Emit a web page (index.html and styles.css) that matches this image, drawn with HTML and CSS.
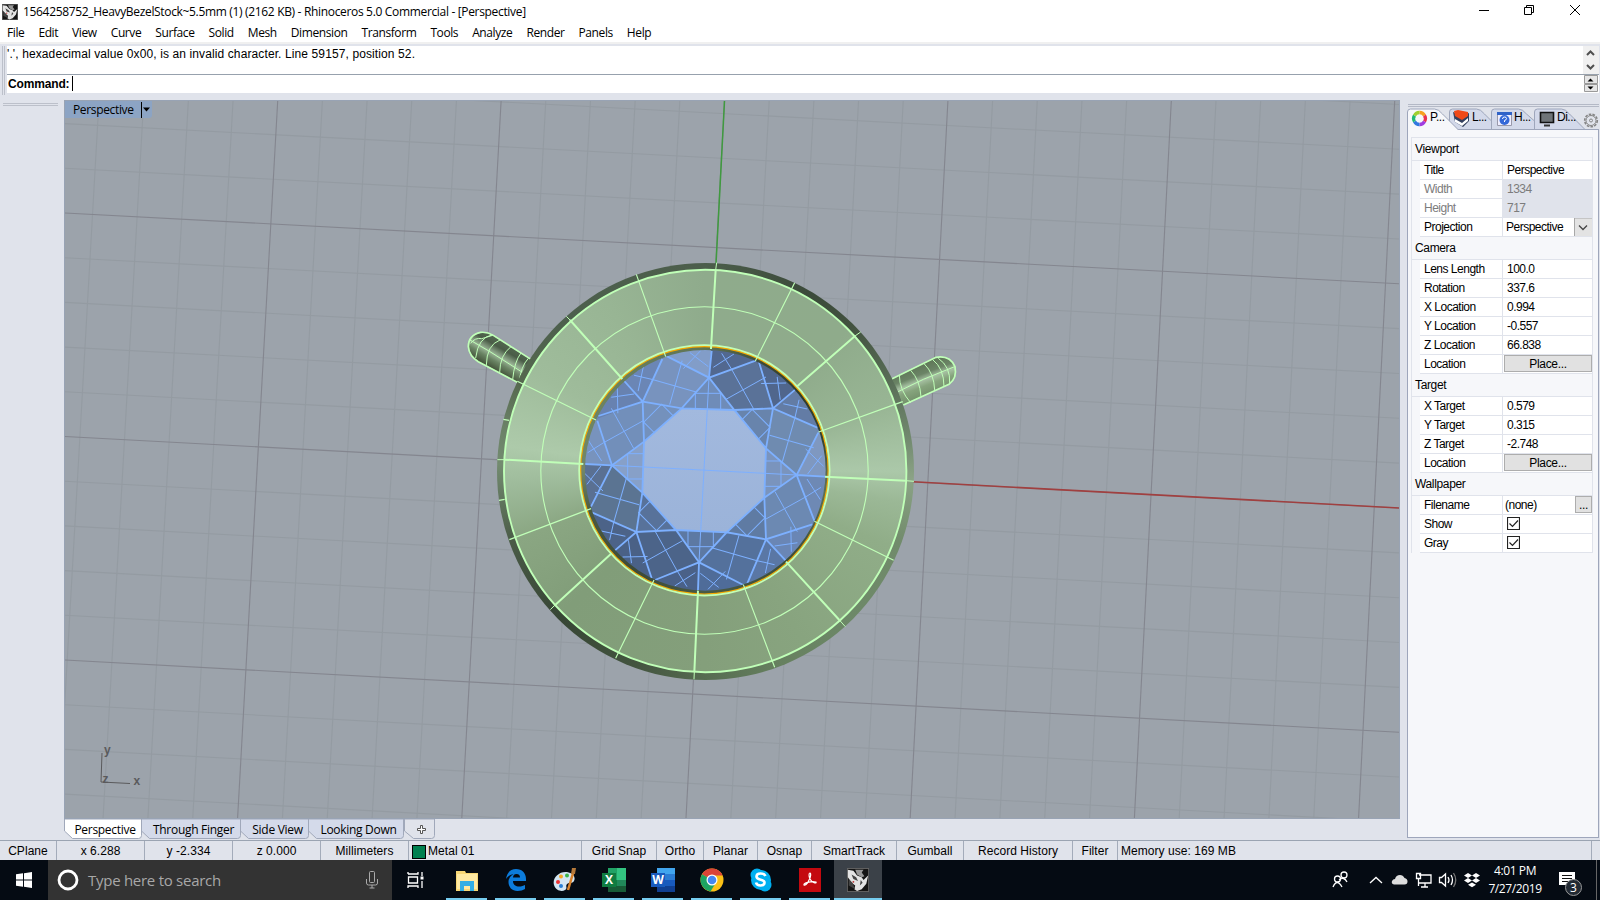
FILE: index.html
```html
<!DOCTYPE html>
<html lang="en">
<head>
<meta charset="utf-8">
<title>Rhinoceros 5.0 Commercial</title>
<link rel="stylesheet" href="styles.css">
</head>
<body>
<svg width="0" height="0" class="defs">
  <symbol id="rhino" viewBox="0 0 24 26">
    <rect width="24" height="26" fill="#666"/>
    <rect x="1" y="1" width="22" height="24" fill="#151515"/>
    <path d="M1 2l6 1 4 5 5 2 2 3 5-5-2 9-5 6-5 2-3-2 1-4-4-3-4-6z" fill="#e4e4e4"/>
    <path d="M9 2h9l-2 3 3 4-3 1-5-3z" fill="#999"/>
    <path d="M5 7l5 3 2 4-5-2zM2 12l4 4 3 7-7-4zM15 13l2 3-3 3z" fill="#444"/>
    <circle cx="7" cy="15" r="1" fill="#b33"/>
  </symbol>
</svg>
<div class="app">
  <header class="titlebar">
    <svg class="app-icon" viewBox="0 0 24 26" preserveAspectRatio="none"><use href="#rhino"/></svg>
    <span class="title">1564258752_HeavyBezelStock~5.5mm (1) (2162 KB) - Rhinoceros 5.0 Commercial - [Perspective]</span>
    <svg class="window-buttons" viewBox="0 0 140 24" fill="none" stroke="#000">
      <path d="M19 10.500h10"/>
      <path d="M64.500 7.500h7v7h-7zM66.500 7.500v-2h7v7h-2"/>
      <path d="M110 5l10 10M120 5l-10 10"/>
    </svg>
  </header>
  <nav class="menu">
    <span>File</span><span>Edit</span><span>View</span><span>Curve</span><span>Surface</span><span>Solid</span><span>Mesh</span><span>Dimension</span><span>Transform</span><span>Tools</span><span>Analyze</span><span>Render</span><span>Panels</span><span>Help</span>
  </nav>
  <section class="command">
    <div class="grip"></div>
    <div class="command-text">
      <div class="history"><span>'.', hexadecimal value 0x00, is an invalid character. Line 59157, position 52.</span></div>
      <div class="prompt"><b>Command:</b><i class="caret"></i></div>
    </div>
    <svg class="command-scroll" viewBox="0 0 16 47">
      <rect width="16" height="28" fill="#f0f0f0"/>
      <path d="M4 9l3.500-3.500L11 9M4 19l3.500 3.500L11 19" fill="none" stroke="#505050" stroke-width="2"/>
      <path d="M0 28.500h16" stroke="#97a1ad"/>
      <path d="M1.500 29.500h13v8h-13zM1.500 38.500h13v7h-13z" fill="#e6e6e6" stroke="#9a9a9a"/>
      <path d="M4.500 35.500h6l-3-3zM4.500 40.500h6l-3 3z"/>
    </svg>
  </section>
  <main class="work">
    <aside class="left-dock"><div class="dock-grip"></div></aside>
    <section class="center">
      <div class="viewport">
        <svg class="scene" viewBox="64 101 1336 717">
          <defs>
            <clipPath id="gemClip"><circle cx="406" cy="391" r="361"/></clipPath>
            <linearGradient id="table" x2="0" y2="1"><stop stop-color="#a2b9de"/><stop offset="1" stop-color="#9bb3d9"/></linearGradient>
            <linearGradient id="prongL" gradientUnits="userSpaceOnUse" x1="168" y1="280" x2="126" y2="352">
              <stop stop-color="#52674f"/><stop offset=".25" stop-color="#4a5c47"/><stop offset=".55" stop-color="#9ab496"/><stop offset=".75" stop-color="#6a8464"/><stop offset="1" stop-color="#48593f"/>
            </linearGradient>
            <linearGradient id="prongR" gradientUnits="userSpaceOnUse" x1="1398" y1="350" x2="1430" y2="435">
              <stop stop-color="#607859"/><stop offset=".3" stop-color="#6b8466"/><stop offset=".5" stop-color="#a6c0a2"/><stop offset=".7" stop-color="#86a47d"/><stop offset="1" stop-color="#75926d"/>
            </linearGradient>
            <g id="iso">
              <path d="M485 88L551 207M468 178L588 111M376 205V160H452V208M430 82L492 42M455 40L485 88M415 80L360 38M392 32L340 86"/>
            </g>
          </defs>
          <g id="minor" class="minor"></g>
          <g id="major" class="major"></g>
          <path d="M724.500 101L716 264" stroke="#3f9a3f" stroke-width="1.500"/>
          <path d="M913 481.800L1399 508" stroke="#a04040" stroke-width="1.600"/>
          <g class="wire" transform="translate(450 250) scale(.33333)">
            <path d="M243 328L130 256Q112 245 92 247Q55 255 55 290Q57 318 85 335L213 403z" fill="url(#prongL)"/>
            <path d="M243 328L130 256Q112 245 92 247Q55 255 55 290Q57 318 85 335L213 403" stroke-width="5"/>
            <path d="M60 270L120 305L225 372M128 254Q84 262 77 324M150 270Q110 285 109 345M183 290Q150 315 149 367M213 309Q193 335 188 389M235 325Q212 350 207 400M62 280Q75 262 95 266L128 256" stroke-width="3"/>
            <path d="M1325 387L1458 322Q1500 315 1515 350Q1522 385 1497 403L1360 465z" fill="url(#prongR)"/>
            <path d="M1325 387L1458 322Q1500 315 1515 350Q1522 385 1497 403L1360 465" stroke-width="5"/>
            <path d="M1338 428L1420 388L1514 350M1382 361Q1410 390 1413 440M1423 342Q1452 370 1454 420M1448 329Q1482 355 1482 410M1465 325Q1502 350 1499 400M1348 375Q1348 420 1382 458" stroke-width="3"/>
          </g>
          <foreignObject x="497" y="262.500" width="417" height="417"><div class="rim"></div></foreignObject>
          <foreignObject x="504" y="269.500" width="402" height="402"><div class="face"></div></foreignObject>
          <foreignObject x="580" y="346" width="249" height="249"><div class="seat"></div></foreignObject>
          <g class="wire">
            <circle cx="705.200" cy="471" r="201.200" stroke-width="1.900"/>
            <circle cx="704.500" cy="470.500" r="163.700" stroke-width="1.100"/>
          </g>
          <g transform="translate(570 340) scale(.33333)">
            <g clip-path="url(#gemClip)" stroke="none">
              <path fill="#5a7298" d="M417 113L493 210L609 205L562 55z"/>
              <path fill="#6f8bb0" d="M609 205L588 325L680 405L755 268z"/>
              <path fill="#6c89b2" d="M680 405L583 473L588 598L745 555z"/>
              <path fill="#54719c" d="M588 598L470 577L387 667L525 745z"/>
              <path fill="#4c6489" d="M387 667L318 570L199 576L245 735z"/>
              <path fill="#5b7492" d="M199 576L217 458L126 376L50 510z"/>
              <path fill="#728fba" d="M126 376L222 305L218 185L70 235z"/>
              <path fill="#7893be" d="M218 185L335 205L417 113L280 40z"/>
              <path fill="#829dc8" d="M417 113L425 20L280 20V45z"/>
              <path fill="#52688f" d="M417 113L425 20L570 20L560 62z"/>
              <path fill="#50668c" d="M609 205L560 62L600 20L700 130z"/>
              <path fill="#637ca5" d="M609 205L690 135L780 250L750 268z"/>
              <path fill="#7f98c0" d="M680 405L748 268L800 290L780 411z"/>
              <path fill="#6e89b4" d="M680 405L780 411L770 560L735 548z"/>
              <path fill="#6a86b5" d="M588 598L735 548L760 620L660 676z"/>
              <path fill="#5a77a5" d="M588 598L660 676L600 740L525 738z"/>
              <path fill="#4f6c99" d="M387 667L525 738L520 780L384 770z"/>
              <path fill="#4a6188" d="M387 667L384 770L240 770L248 722z"/>
              <path fill="#4a6186" d="M199 576L248 722L200 740L120 645z"/>
              <path fill="#4c6388" d="M199 576L120 645L20 550L60 512z"/>
              <path fill="#5a7092" d="M126 376L60 512L20 500L30 371z"/>
              <path fill="#7893bd" d="M126 376L30 371L30 240L78 238z"/>
              <path fill="#6882b0" d="M218 185L78 238L60 190L150 108z"/>
              <path fill="#6b86b5" d="M218 185L150 108L200 40L283 45z"/>
              <path fill="#6f8cb8" d="M417 113L493 210L335 205z"/>
              <path fill="#6884ac" d="M609 205L588 325L493 210z"/>
              <path fill="#7a94bd" d="M680 405L583 473L588 325z"/>
              <path fill="#5f7ba3" d="M588 598L470 577L583 473z"/>
              <path fill="#5d79a3" d="M387 667L318 570L470 577z"/>
              <path fill="#58729a" d="M199 576L217 458L318 570z"/>
              <path fill="#87a0c8" d="M126 376L222 305L217 458z"/>
              <path fill="#7491bc" d="M218 185L335 205L222 305z"/>
              <path fill="url(#table)" d="M335 205L493 210L588 325L583 473L470 577L318 570L217 458L222 305z"/>
            </g>
            <g clip-path="url(#gemClip)" fill="none" stroke="#7db0ff">
              <g stroke-width="3">
                <use href="#iso"/><use href="#iso" transform="rotate(45 403 390)"/><use href="#iso" transform="rotate(90 403 390)"/><use href="#iso" transform="rotate(135 403 390)"/><use href="#iso" transform="rotate(180 403 390)"/><use href="#iso" transform="rotate(225 403 390)"/><use href="#iso" transform="rotate(270 403 390)"/><use href="#iso" transform="rotate(315 403 390)"/>
                <path d="M417 113L387 667M126 376L680 405"/>
              </g>
              <path stroke-width="5.500" d="M335 205L493 210L588 325L583 473L470 577L318 570L217 458L222 305zM417 113L493 210L609 205L588 325L680 405L583 473L588 598L470 577L387 667L318 570L199 576L217 458L126 376L222 305L218 185L335 205z"/>
              <path stroke-width="5.500" d="M417 113L425 33M609 205L680 145M680 405L765 410M588 598L650 665M387 667L384 750M199 576L128 637M126 376L45 372M218 185L160 120M557 62L417 113L287 47M567 67L609 205L742 263M745 278L680 405L733 542M727 553L588 598L532 730M520 735L387 667L255 720M245 715L199 576L67 518M63 500L126 376L82 242M85 228L218 185L277 57"/>
            </g>
          </g>
          <circle cx="704.400" cy="470.300" r="123.800" fill="none" stroke="#f5a800" stroke-width="1.300"/>
          <circle cx="704.400" cy="470.300" r="125.200" fill="none" stroke="#c4ffb4" stroke-width="1.800"/>
          <g class="wire" transform="translate(450 250) scale(.33333)">
            <path stroke-width="6" d="M797 60L783 297M360 210L517 387M1215 258L1040 410M163 629L400 642M1368 692L1125 680M313 1067L485 910M1168 1110L1008 935M733 1266L744 1022"/>
            <path stroke-width="3" d="M800 38L797 60M349 199L360 210M1232 246L1215 258M142 629L163 629M1392 694L1368 692M301 1079L313 1067M1186 1130L1168 1110M732 1288L733 1266"/>
            <path stroke-width="3.500" d="M559 73L647 320M1034 98L916 333M1358 455L1106 546M1331 931L1093 814M974 1252L880 1004M497 1225L612 990M178 869L423 776M202 394L438 510M160 508L177 511M147 751L164 748"/>
          </g>
          <g class="gumball">
            <path d="M102 753L101 782L130 783.500"/>
            <text x="104" y="754">y</text><text x="102.500" y="783">z</text><text x="133.500" y="785">x</text>
          </g>
        </svg>
        <div class="viewport-label"><span>Perspective</span><svg viewBox="0 0 12 18"><path d="M1.500 1v16" stroke="#000"/><path d="M3 6.500h7l-3.500 4z"/></svg></div>
      </div>
      <div class="view-tabs">
        <svg class="tab-shapes" viewBox="0 0 400 20" stroke="#a0a8ba">
          <path d="M340.500 0v12l9 7.500h18q3 0 3-3v-16.500z" fill="#e0e3eb"/>
          <path d="M244.500 0v12l8 7.500h84q3 0 3-3v-16.500z" fill="#d4daea"/>
          <path d="M176.500 0v12l8 7.500h57q3 0 3-3v-16.500z" fill="#d4daea"/>
          <path d="M77.500 0v12l8 7.500h88q3 0 3-3v-16.500z" fill="#d4daea"/>
          <path d="M.5 0v12l8 7.500h66q3 0 3-3v-16.500z" fill="#fff"/>
          <path d="M356.500 6.500h2v3h3v2h-3v3h-2v-3h-3v-2h3z" fill="#fff" stroke="#555"/>
        </svg>
        <span class="t1">Perspective</span><span class="t2">Through Finger</span><span class="t3">Side View</span><span class="t4">Looking Down</span>
      </div>
    </section>
    <aside class="panel">
      <div class="panel-grip"></div>
      <div class="panel-tabs">
        <svg class="panel-tab-shapes" viewBox="0 0 192 22" stroke="#9ea6bb">
          <path d="M127.500 22V4q0-3 3-3h24q4 0 8 5l16 16" fill="#d3d9ea"/>
          <path d="M84.500 22V4q0-3 3-3h24q4 0 8 5l8 7v9" fill="#d3d9ea"/>
          <path d="M42.500 22V4q0-3 3-3h24q4 0 8 5l7 7v9" fill="#d3d9ea"/>
          <path d="M0 21.500h192"/>
          <path d="M.5 23V4q0-3 3-3h24q4 0 8 5l16 16" fill="#f6f7fa"/>
          <path d="M1 22.500h50" stroke="#f6f7fa"/>
          <g fill="none" stroke-width="3.300">
            <path d="M12.500 4.500a5.500 5.500 0 0 1 5 3" stroke="#f6a020"/><path d="M17.500 7.500a5.500 5.500 0 0 1 0 6" stroke="#e83050"/><path d="M17.500 13.500a5.500 5.500 0 0 1-5 3" stroke="#a03ce0"/><path d="M12.500 16.500a5.500 5.500 0 0 1-5-3" stroke="#3078e0"/><path d="M7.500 13.500a5.500 5.500 0 0 1 0-6" stroke="#20b878"/><path d="M7.500 7.500a5.500 5.500 0 0 1 5-3" stroke="#a0d030"/>
          </g>
          <path d="M46 4l10 4 6-3v8l-6 6-8-5z" fill="#33405f" stroke="none"/><path d="M47 3l4-1 10 2v4l-6 4-7-4z" fill="#f04818" stroke="none"/><path d="M48 11l7 4 6-5v3l-6 5-7-4z" fill="#fff" stroke="none"/>
          <path d="M90.500 4.500h14v13h-14z" fill="#eef" stroke="#99a"/><path d="M90 4h15v3H90z" fill="#2f62c8" stroke="none"/><circle cx="97.500" cy="12" r="5" fill="#3468d8" stroke="none"/><path d="M95.500 11q0-2 2-2t2 1.500-2 2v1.500" fill="none" stroke="#fff"/>
          <path d="M133.500 4.500h13v10h-13z" fill="#6f7478" stroke="#111" stroke-width="1.600"/><path d="M137 17.500h6" stroke="#333" stroke-width="2"/>
          <g fill="none" stroke="#858585"><circle cx="184" cy="12.500" r="6.300" stroke-width="1.600" stroke-dasharray="2.600 1.200"/><circle cx="184" cy="12.500" r="5"/><circle cx="184" cy="12.500" r="1.500"/></g>
        </svg>
        <span class="p1">P...</span><span class="p2">L...</span><span class="p3">H...</span><span class="p4">Di...</span>
      </div>
      <div class="panel-body">
        <div class="props">
          <h3>Viewport</h3>
          <div class="row"><span>Title</span><span>Perspective</span></div>
          <div class="row off"><span>Width</span><span>1334</span></div>
          <div class="row off"><span>Height</span><span>717</span></div>
          <div class="row"><span>Projection</span><span class="tight">Perspective<svg class="combo" viewBox="0 0 18 18"><path d="M.5 0v18M0 0h18" stroke="#a8a8a8"/><path d="M5 7.500l4 4 4-4" fill="none" stroke="#444" stroke-width="1.300"/></svg></span></div>
          <h3>Camera</h3>
          <div class="row"><span>Lens Length</span><span>100.0</span></div>
          <div class="row"><span>Rotation</span><span>337.6</span></div>
          <div class="row"><span>X Location</span><span>0.994</span></div>
          <div class="row"><span>Y Location</span><span>-0.557</span></div>
          <div class="row"><span>Z Location</span><span>66.838</span></div>
          <div class="row"><span>Location</span><button>Place...</button></div>
          <h3>Target</h3>
          <div class="row"><span>X Target</span><span>0.579</span></div>
          <div class="row"><span>Y Target</span><span>0.315</span></div>
          <div class="row"><span>Z Target</span><span>-2.748</span></div>
          <div class="row"><span>Location</span><button>Place...</button></div>
          <h3>Wallpaper</h3>
          <div class="row"><span>Filename</span><span class="none">(none)<button class="dots">...</button></span></div>
          <div class="row"><span>Show</span><span><svg class="check" viewBox="0 0 13 13"><path d="M.5.5h12v12H.5z"/><path d="M2.500 6.500l3 3 5.500-6"/></svg></span></div>
          <div class="row"><span>Gray</span><span><svg class="check" viewBox="0 0 13 13"><path d="M.5.5h12v12H.5z"/><path d="M2.500 6.500l3 3 5.500-6"/></svg></span></div>
        </div>
      </div>
    </aside>
  </main>
  <footer class="status">
    <span>CPlane</span><span>x 6.288</span><span>y -2.334</span><span>z 0.000</span><span class="mm">Millimeters</span><span class="layer"><i></i>Metal 01</span><span>Grid Snap</span><span>Ortho</span><span>Planar</span><span>Osnap</span><span>SmartTrack</span><span>Gumball</span><span>Record History</span><span>Filter</span><span class="mem">Memory use: 169 MB</span><span></span>
  </footer>
  <div class="taskbar">
    <div class="start"><svg width="16" height="16" viewBox="0 0 16 16" fill="#fff"><path d="M0 2.300l7-1v6.200H0zM8 1.200L16 0v7.500H8zM0 8.500h7v6.200l-7-1zM8 8.500h8V16l-8-1.200z"/></svg></div>
    <div class="search">
      <svg width="22" height="22" viewBox="0 0 22 22"><circle cx="11" cy="11" r="9" fill="none" stroke="#fff" stroke-width="2.800"/></svg>
      <span>Type here to search</span>
      <svg width="12" height="18" viewBox="0 0 12 18" fill="none" stroke="#aaa"><path d="M3.500 1.500q0-1 1-1h3q1 0 1 1v9q0 1-1 1h-3q-1 0-1-1zM.5 8v4q0 2 2 2h7q2 0 2-2V8M6 14v3M3.500 17h5"/></svg>
    </div>
    <div class="taskview"><svg width="18" height="18" viewBox="0 0 18 18" fill="none" stroke="#fff" stroke-width="1.300"><path d="M1 3V1M1 3h10V1M1.500 6h9v6h-9zM1 17v-2h10v2M15 1v4M15 10v7"/><path d="M13.500 5.500h3v3h-3z" fill="#fff" stroke="none"/></svg></div>
    <div class="task"><svg viewBox="0 0 24 24"><path d="M1 3h9l1 2h12v18H1z" fill="#f8d775"/><path d="M2 6h20v15H2z" fill="#ffe9a2"/><path d="M5 13h14v10h-4v-5H9v5H5z" fill="#32aee5"/></svg></div>
    <div class="task"><svg viewBox="0 0 24 24"><path d="M2 11C3 4 7 1 12 1c6 0 10 4 10 10v2H9c0 4 3 5.500 6 5.500 2.500 0 4.500-.7 6-1.500v4c-2 1.200-4.300 2-7.500 2C8 23 4.500 19 4.500 14c0-3.500 2-6.500 5-7.800C6 6.500 3.500 8.500 2 11zm7-1.500h7C16 7.500 15 6 12.500 6S9.200 7.800 9 9.500z" fill="#0c7cdc"/></svg></div>
    <div class="task paint"><svg viewBox="0 0 24 24"><path d="M1 17C-1 10 6 3 14 4c6 1 9 5 7 9-2 3-5 1-7 3s1 4-2 6-9 1-11-5z" fill="#d3e6f3"/><circle cx="5" cy="14" r="2" fill="#e33"/><circle cx="8" cy="8.500" r="2" fill="#f5a623"/><circle cx="14" cy="7.500" r="2" fill="#3bb54a"/><circle cx="8" cy="18" r="2" fill="#2a7fd4"/><path d="M21 2l-6 20" stroke="#d9822b" stroke-width="2.500"/><path d="M19 0h4l-1 6h-4z" fill="#b5793a"/></svg></div>
    <div class="task"><svg viewBox="0 0 24 24"><path d="M6 0h18v24H6z" fill="#185c37"/><path d="M6 0h18v12H6z" fill="#33c481"/><path d="M6 0h9v12H6z" fill="#21a366"/><path d="M6 12h9v6H6z" fill="#107c41"/><path d="M15 12h9v6h-9z" fill="#21895a"/><path d="M0 5h14v14H0z" fill="#107c41"/><text x="7" y="16">X</text></svg></div>
    <div class="task"><svg viewBox="0 0 24 24"><path d="M6 0h18v24H6z" fill="#103f91"/><path d="M6 0h18v6H6z" fill="#41a5ee"/><path d="M6 6h18v6H6z" fill="#2b7cd3"/><path d="M6 12h18v6H6z" fill="#185abd"/><path d="M0 5h14v14H0z" fill="#185abd"/><text x="7" y="16">W</text></svg></div>
    <div class="task"><svg viewBox="0 0 24 24"><circle cx="12" cy="12" r="11.500" fill="#fbc116"/><path d="M12 12L2 6.300A11.500 11.500 0 0 1 22.500 7.500H12z" fill="#db4437"/><path d="M2 6.300A11.500 11.500 0 0 0 10.500 23.400L16 14.500 12 12z" fill="#1da462"/><circle cx="12" cy="12" r="5.500" fill="#fff"/><circle cx="12" cy="12" r="4.300" fill="#4688f1"/></svg></div>
    <div class="task"><svg viewBox="0 0 24 24"><circle cx="12" cy="12" r="10" fill="#00aff0"/><circle cx="8" cy="7" r="6.500" fill="#00aff0"/><circle cx="16" cy="17" r="6.500" fill="#00aff0"/><path d="M16.500 8c-1-2-3-2.500-5-2.500-2.500 0-4 1.300-4 3 0 4.500 8 2 8 6 0 2-2 3-4 3-2.500 0-4-1-4.500-3" fill="none" stroke="#fff" stroke-width="2.600"/></svg></div>
    <div class="task"><svg viewBox="0 0 24 24"><path d="M1 0h22v24H1z" fill="#c4090f"/><path d="M6 17c-1-2 7-4 12-3 1 2-4 1-6-3-1.500-3-1-6 0-6s1 4-1 7c-1 3-4 6-5 5z" fill="none" stroke="#fff" stroke-width="1.200"/></svg></div>
    <div class="task active"><svg viewBox="0 0 24 26"><use href="#rhino"/></svg></div>
    <div class="tray">
      <svg class="tray-icons" viewBox="0 0 160 40" fill="none" stroke="#fff" stroke-width="1.300">
        <circle cx="16" cy="15" r="3"/><path d="M11 20q5-4 8 2"/><circle cx="9.500" cy="19" r="3"/><path d="M5 27q4-9 9 0"/>
        <path d="M42 23l6-5.500 6 5.500"/>
        <path d="M66 24.500q-3-1-2-3.500 1-2 3-2 1-4 5-4 3 0 4.500 3 3 .5 3 3.500t-3 3z" fill="#ddd" stroke="none"/>
        <path d="M91 15h12v8H90M97 23v4M93 27h7M88.500 13.500h4v5h-4zM90.500 18v8"/>
        <path d="M111.500 17.500h2l4-3.500v12l-4-3.500h-2z"/><path d="M120 17q2 3 0 6M123 15q3 5 0 10" /><path d="M125.500 13q4.500 7 0 14" stroke="#777"/>
        <path d="M140 13l4 2.500-4 2.500-4-2.500zM148 13l4 2.500-4 2.500-4-2.500zM140 18l4 2.500-4 2.500-4-2.500zM148 18l4 2.500-4 2.500-4-2.500zM144 22.500l4 2.300-4 2.500-4-2.500z" fill="#fff" stroke="none"/>
      </svg>
      <div class="clock"><div>4:01 PM</div><div>7/27/2019</div></div>
      <div class="notice"><svg width="18" height="18" viewBox="0 0 18 18"><path d="M0 0h16v13h-5l-4 4v-4H0z" fill="#fff"/><path d="M3 3.500h10M3 6.500h10M3 9.500h7" stroke="#111"/></svg><span>3</span></div>
    </div>
  </div>
</div>
<script src="grid.js"></script>
</body>
</html>
```
FILE: grid.js
```js
// Construction plane grid: every fifth line is a major one.
function addLine(step, x1, y1, x2, y2) {
  var line = document.createElementNS('http://www.w3.org/2000/svg', 'line');
  line.setAttribute('x1', x1);
  line.setAttribute('y1', y1);
  line.setAttribute('x2', x2);
  line.setAttribute('y2', y2);
  document.getElementById(step % 5 === 0 ? 'major' : 'minor').appendChild(line);
}
for (var i = -16; i <= 17; i++) {
  addLine(i, 724.5 + 44.68 * i, 101, 686 + 44.84 * i, 818);
}
for (var j = -9; j <= 9; j++) {
  addLine(j, 65, 436.5 + 44.7 * j, 1399, 508 + 44.84 * j);
}
```
FILE: styles.css
```css
* { box-sizing: border-box; }
body { margin: 0; background: #e0e3eb; font: 12px "Liberation Sans", Arial, sans-serif; color: #000; }
.defs { display: block; position: absolute; }
.app { width: 1600px; height: 900px; display: flex; flex-direction: column; overflow: hidden; }
.app span { white-space: nowrap; }

.titlebar { height: 24px; flex: none; background: #fff; display: flex; align-items: center; }
.app-icon { width: 16px; height: 16px; margin-left: 2px; margin-bottom: 1px; }
.title { margin-left: 5px; margin-bottom: 1px; font: 12px "Open Sans", sans-serif; letter-spacing: -0.33px; }
.window-buttons { width: 140px; height: 24px; margin-left: auto; }
.menu { height: 18px; flex: none; background: #fff; display: flex; align-items: center; gap: 14px; padding: 0 0 2px 7px; font: 12px "Open Sans", sans-serif; letter-spacing: -0.4px; }

.command { height: 52px; flex: none; border-top: 2px solid #f0f0f0; padding: 2px 1px 0 2px; display: flex; }
.grip { width: 3px; height: 49px; border: solid #bcc0ca; border-width: 0 1px; margin-right: 2px; }
.command-text { flex: 1; height: 47px; background: #fff; }
.history { height: 29px; border-bottom: 1px solid #97a1ad; padding: 1px 0 0; line-height: 14px; letter-spacing: 0.11px; }
.prompt { height: 17px; display: flex; align-items: center; padding-left: 1px; }
.prompt b { letter-spacing: -0.15px; }
.caret { width: 1px; height: 15px; background: #000; margin-left: 3px; }
.command-scroll { width: 16px; height: 47px; background: #fff; }

.work { height: 746px; flex: none; display: flex; }
.left-dock { width: 64px; padding: 9px 6px 0 3px; }
.dock-grip { height: 3px; border: solid #bcc0ca; border-width: 1px 0; }
.center { width: 1336px; padding-top: 6px; }
.viewport { position: relative; height: 719px; border: 1px solid #98a3b4; background: #9ca3ab; overflow: hidden; }
.scene { display: block; width: 1336px; height: 717px; margin-left: -1px; }
.minor { stroke: #949ba2; stroke-width: 1.1; }
.major { stroke: #84868f; stroke-width: 1.1; }
.wire { fill: none; stroke: #c0ffb8; }
.rim, .face, .seat { width: 100%; height: 100%; border-radius: 50%; }
.rim { background: conic-gradient(#4c5e4b, #3b4a3a 30deg, #42523f 45deg, #5a6f58 65deg, #70886d 80deg, #8ba386 92deg, #718b6b 110deg, #6d8868 135deg, #66805f 160deg, #566c51 180deg, #43543f 200deg, #374635 225deg, #4a5b47 250deg, #738b70 272deg, #6a8066 283deg, #56694f 295deg, #4d604d 315deg, #4c5e4b); }
.face { background: conic-gradient(#8fab8c, #8fab8b 45deg, #98b594 70deg, #abc8a9 90deg, #9bb896 99deg, #90ad88 112deg, #88a47f 150deg, #849f7b 180deg, #819d79 225deg, #8aa682 250deg, #9ebb9b 266deg, #adcaaa 277deg, #9fbc9b 300deg, #98b594 330deg, #8fab8c); }
.seat { background: conic-gradient(#5f7455, #3c4a35 30deg, #2f3d2c 50deg, #344231 75deg, #56684f 90deg, #5d7052 100deg, #3e4e38 135deg, #4a5b44 180deg, #3c4a37 215deg, #4a5a40 250deg, #71876a 270deg, #6d8461 300deg, #5f7455); }
.gumball { fill: none; stroke: #5a5a5c; }
.gumball text { fill: #5a5a5c; stroke: none; font: bold 12px "Liberation Sans", sans-serif; }
.viewport-label { position: absolute; left: 0; top: 0; width: 87px; height: 17px; background: #8ca4c4; padding-left: 8px; display: flex; align-items: center; font: 12px "Open Sans", sans-serif; letter-spacing: -0.35px; border-radius: 0 0 3px 0; }
.viewport-label svg { width: 12px; height: 18px; margin-left: auto; }
.view-tabs { position: relative; height: 20px; display: flex; align-items: center; font: 12px "Open Sans", sans-serif; letter-spacing: -0.3px; }
.view-tabs svg { position: absolute; left: 0; top: 0; width: 400px; height: 20px; fill: none; }
.view-tabs span { position: relative; text-align: center; }
.t1 { width: 82px; }
.t2 { width: 95px; }
.t3 { width: 73px; }
.t4 { width: 89px; }

.panel { width: 200px; padding: 10px 1px 0 7px; }
.panel-grip { height: 3px; margin-left: 1px; border: solid #b4b9c6; border-width: 1px 0; }
.panel-tabs { position: relative; height: 22px; margin-top: 1px; display: flex; font-size: 12px; letter-spacing: -0.5px; line-height: 19px; }
.panel-tabs svg { position: absolute; left: 0; top: 0; width: 192px; height: 22px; }
.panel-tabs span { position: relative; }
.p1 { margin-left: 23px; width: 42px; }
.p2 { width: 42px; }
.p3 { width: 43px; }
.panel-body { height: 708px; border: 1px solid #9ea6bb; border-top: 0; background: #f6f7fa; padding: 7px 5px 0 3px; }
.props { border: solid #e0e3eb; border-width: 1px 1px 0; font-size: 12px; letter-spacing: -0.5px; }
.props h3 { margin: 0; height: 23px; line-height: 23px; padding-left: 3px; font-size: 12px; font-weight: normal; letter-spacing: -0.35px; border-bottom: 1px solid #e0e3eb; }
.row { height: 19px; display: grid; grid-template-columns: 83px 1fr; margin-left: 8px; background: #fff; border-bottom: 1px solid #e0e3eb; line-height: 18px; }
.row > span { padding-left: 4px; position: relative; }
.row > span:first-child { border-right: 1px solid #e0e3eb; }
.row > span.tight { padding-left: 3px; }
.row > span.none { padding-left: 2px; }
.off { color: #7c7c7c; }
.off > span:last-child { background: #e0e3eb; }
.combo { position: absolute; right: 0; top: 0; width: 18px; height: 18px; background: #e3e3e3; }
button { font: 12px/14px "Liberation Sans", sans-serif; letter-spacing: -0.3px; padding: 0; margin: 0 0 0 1px; height: 17px; background: #e1e1e1; border: 1px solid #adadad; border-radius: 0; color: #000; }
.dots { position: absolute; right: 0; top: 0; width: 17px; }
.check { width: 13px; height: 13px; display: block; margin-top: 2px; fill: none; stroke: #222; stroke-width: 1.2; }

.status { height: 20px; flex: none; border-top: 1px solid #9ba4b2; display: grid; grid-template-columns: 57px 88px 88px 88px 88px 173px 75px 47px 54px 54px 85px 67px 109px 45px 474px 8px; text-align: center; line-height: 20px; }
.status span { border-right: 1px solid #a3abba; letter-spacing: 0.05px; }
.status span:last-child { border: 0; }
.status .layer, .status .mem { text-align: left; padding-left: 3px; }
.status .layer { display: flex; gap: 2px; align-items: center; }
.layer i { width: 14px; height: 14px; background: #008050; border: 1px solid #000; margin-top: 1px; }

.taskbar { height: 40px; flex: none; background: #050b13; display: flex; color: #fff; font-family: "Open Sans", sans-serif; }
.start { width: 48px; display: grid; place-items: center; }
.search { width: 344px; background: #333; display: flex; align-items: center; padding: 0 14px 0 9px; font-size: 15px; color: #a8a8a8; letter-spacing: -0.27px; }
.search span { margin-left: 9px; margin-right: auto; }
.taskview { width: 51px; display: grid; place-items: center; padding-right: 3px; }
.task { width: 41px; margin-left: 8px; height: 40px; display: grid; place-items: center; padding-top: 1px; border-bottom: 2px solid #76cdf0; }
.taskview + .task { margin-left: 3px; }
.task svg { width: 24px; height: 24px; }
.task text { fill: #fff; font: bold 12px "Open Sans", sans-serif; text-anchor: middle; }
.task.active { width: 48px; margin-left: 4px; background: #3b4148; }
.tray { margin-left: auto; display: flex; }
.tray-icons { width: 160px; height: 40px; margin-right: -8px; }
.clock { width: 70px; text-align: center; font-size: 12px; line-height: 18px; padding-top: 2px; letter-spacing: -0.4px; }
.notice { position: relative; width: 47px; padding: 12px 0 0 9px; border-right: 1px solid #666; margin-right: 3px; }
.notice span { position: absolute; left: 15px; top: 19px; width: 17px; height: 17px; border: 1px solid #999; border-radius: 50%; background: #222a33; font-size: 12px; line-height: 15px; text-align: center; }
```
